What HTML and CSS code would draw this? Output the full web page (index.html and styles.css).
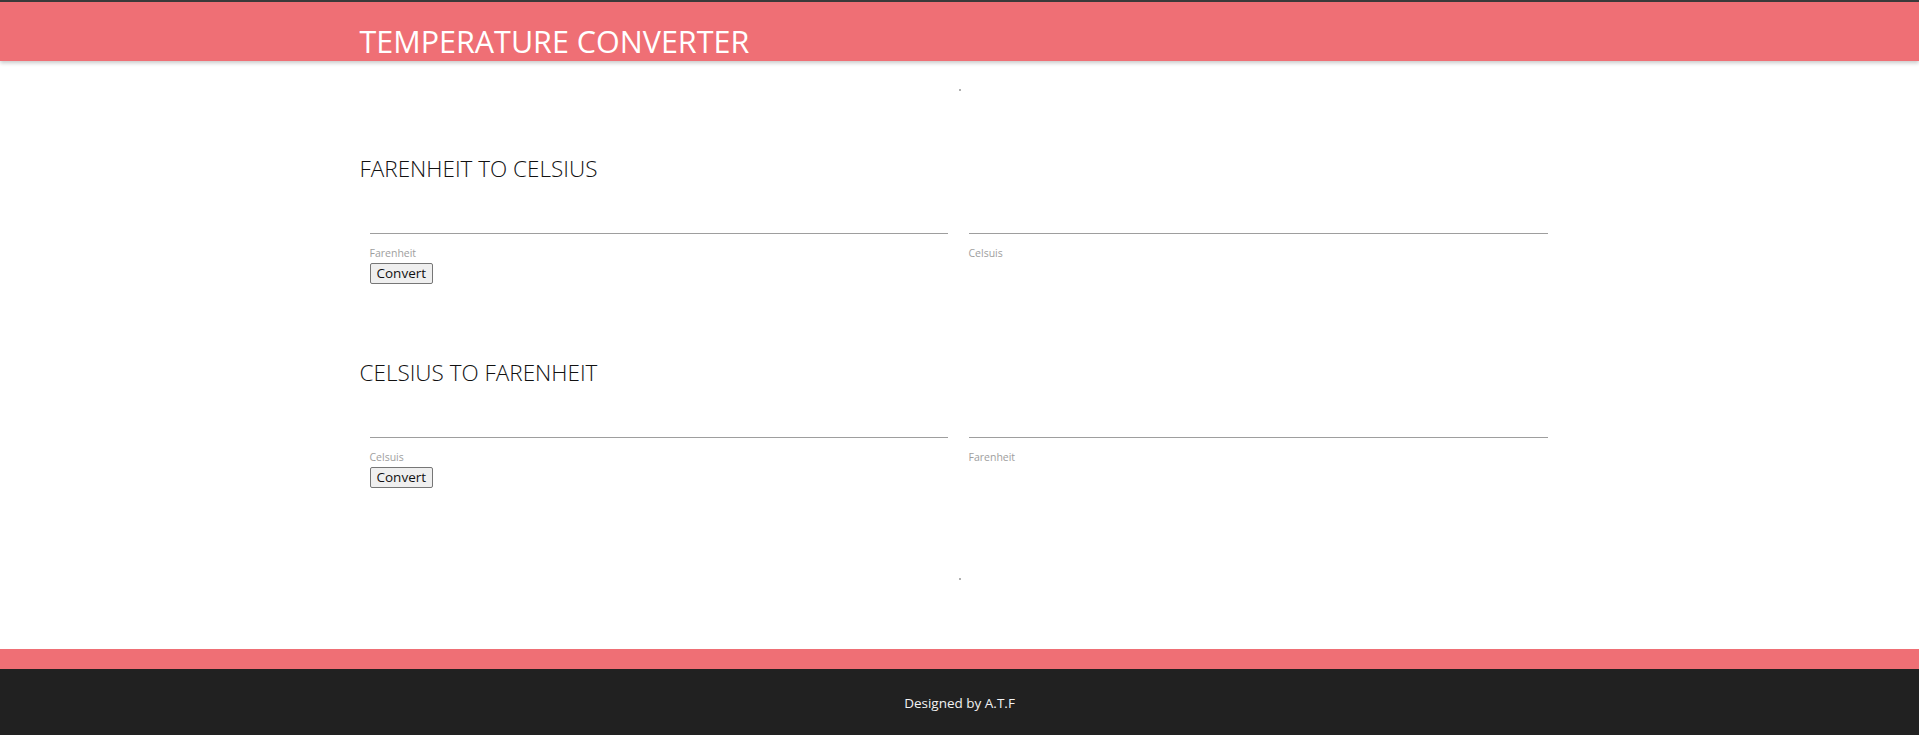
FILE: index.html
```html
<!DOCTYPE html>
<html lang="en">
<head>
<meta charset="utf-8">
<title>Temperature Converter</title>
<link rel="stylesheet" href="styles.css">
</head>
<body>
<header class="topbar">
  <div class="container">
    <h1 class="brand">TEMPERATURE CONVERTER</h1>
  </div>
</header>
<main class="main">
  <div class="dot"></div>
  <div class="container">
    <section class="converter first">
      <h2 class="conv-title">FARENHEIT TO CELSIUS</h2>
      <div class="row">
        <div class="field">
          <input class="line-input" type="text">
          <label class="field-label">Farenheit</label>
          <button class="btn" type="button">Convert</button>
        </div>
        <div class="field">
          <input class="line-input" type="text">
          <label class="field-label">Celsuis</label>
        </div>
      </div>
    </section>
    <section class="converter second">
      <h2 class="conv-title">CELSIUS TO FARENHEIT</h2>
      <div class="row">
        <div class="field">
          <input class="line-input" type="text">
          <label class="field-label">Celsuis</label>
          <button class="btn" type="button">Convert</button>
        </div>
        <div class="field">
          <input class="line-input" type="text">
          <label class="field-label">Farenheit</label>
        </div>
      </div>
    </section>
  </div>
  <div class="dot dot-bottom"></div>
</main>
<footer class="footer">
  <div class="footer-stripe"></div>
  <div class="footer-body">Designed by A.T.F</div>
</footer>
</body>
</html>
```
FILE: styles.css
```css
html, body {
  margin: 0;
  padding: 0;
}
body {
  font-family: "Open Sans", "Noto Sans", "Liberation Sans", sans-serif;
  background: #ffffff;
  color: #222222;
  height: 735px;
  overflow: hidden;
}
.container {
  width: 1200px;
  margin: 0 auto;
}
.topbar {
  border-top: 2px solid #3a3a3a;
  background: #ef6f75;
  height: 59px;
  box-shadow: 0 2px 4px rgba(0, 0, 0, 0.22);
  position: relative;
  z-index: 1;
}
.brand {
  margin: 0;
  font-weight: 400;
  font-size: 30.5px;
  line-height: 40px;
  color: #ffffff;
  padding-top: 21px;
  margin-top: -2px;
}
.main {
  padding-top: 28px;
}
.dot {
  width: 2px;
  height: 2px;
  margin: 0 auto;
  background: #b0b0b0;
}
.converter.first {
  margin-top: 62px;
}
.converter.second {
  margin-top: 73px;
}
.conv-title {
  margin: 0;
  font-size: 22.5px;
  font-weight: 300;
  line-height: 32px;
  color: #111111;
}
.row {
  display: grid;
  grid-template-columns: 1fr 1fr;
  margin-top: 18px;
}
.field {
  display: flex;
  flex-direction: column;
  align-items: flex-start;
  padding: 0 12px 0 10px;
}
.field + .field {
  padding-left: 9px;
}
.line-input {
  box-sizing: border-box;
  width: 100%;
  height: 31px;
  border: none;
  border-bottom: 1px solid #9e9e9e;
  outline: none;
  background: transparent;
  padding: 0;
  margin: 0;
  font: inherit;
}
.field-label {
  margin-top: 12px;
  font-size: 10.5px;
  line-height: 14px;
  color: #9e9e9e;
}
.btn {
  margin-top: 3px;
  height: 21px;
  padding: 0 6px;
  font-family: inherit;
  font-size: 13.5px;
  line-height: 19px;
  color: #111111;
  background: #efefef;
  border: 1px solid #767676;
  border-radius: 2px;
}
.dot-bottom {
  margin-top: 90px;
}
.footer {
  margin-top: 69px;
}
.footer-stripe {
  height: 20px;
  background: #ef6f75;
}
.footer-body {
  height: 68px;
  background: #212121;
  color: #f2f2f2;
  font-size: 13.5px;
  text-align: center;
  line-height: 68px;
}
```
